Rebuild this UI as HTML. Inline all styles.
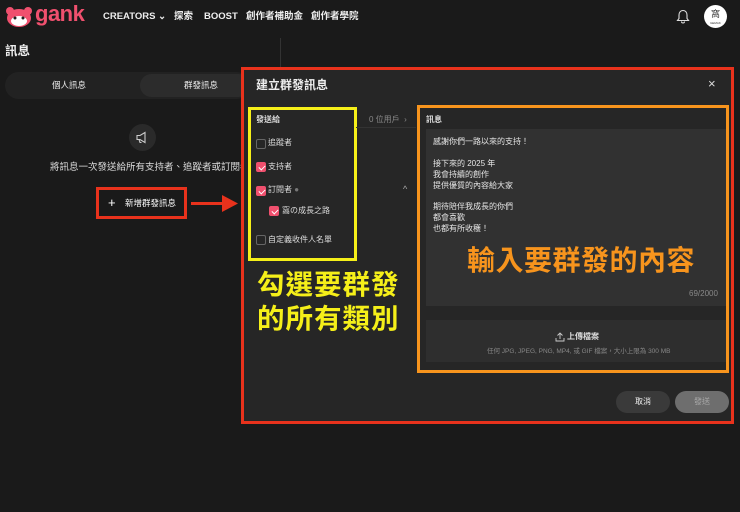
<!DOCTYPE html>
<html><head><meta charset="utf-8"><style>
*{margin:0;padding:0;box-sizing:border-box}
body{width:740px;height:512px;background:#1a1a1a;font-family:"Liberation Sans","Noto Sans CJK TC",sans-serif;color:#eee;position:relative;overflow:hidden}
.a{position:absolute;white-space:nowrap;line-height:1.2}
.cb{position:absolute;width:10px;height:10px;border:1px solid #666;border-radius:2px}
.cb.on{background:#f0506e;border-color:#f0506e}
.cb.on:after{content:"";position:absolute;left:3px;top:1px;width:3px;height:5px;border:solid #fff;border-width:0 1px 1px 0;transform:rotate(45deg)}
.t{font-size:8px;color:#ddd}
.nav{font-size:9.5px;font-weight:bold;line-height:12px;top:11px}
</style></head><body>
<svg class="a" style="left:5px;top:6px" width="28" height="22" viewBox="0 0 28 22"><circle cx="5" cy="5" r="4" fill="#f0506e"/><circle cx="23" cy="5" r="4" fill="#f0506e"/><ellipse cx="14" cy="12" rx="12" ry="9" fill="#f0506e"/><ellipse cx="14" cy="15" rx="8" ry="5" fill="#fff"/><circle cx="10" cy="12" r="1.5" fill="#222"/><circle cx="18" cy="12" r="1.5" fill="#222"/></svg>
<div class="a" style="left:35px;top:1px;font-size:22px;font-weight:bold;color:#f0506e;letter-spacing:-0.5px">gank</div>
<div class="a nav" style="left:103px">CREATORS ⌄</div>
<div class="a nav" style="left:174px">探索</div>
<div class="a nav" style="left:204px">BOOST</div>
<div class="a nav" style="left:246px">創作者補助金</div>
<div class="a nav" style="left:311px">創作者學院</div>
<svg class="a" style="left:676px;top:9px" width="14" height="15" viewBox="0 0 14 15"><path d="M7 1.5C4.5 1.5 3 3.5 3 6v3.5L1.5 11.5h11L11 9.5V6c0-2.5-1.5-4.5-4-4.5zM5.5 12.5a1.5 1.5 0 0 0 3 0" fill="none" stroke="#ddd" stroke-width="1.1"/></svg>
<div class="a" style="left:704px;top:5px;width:23px;height:23px;border-radius:50%;background:#fff;color:#333;font-size:9px;text-align:center;line-height:15px;padding-top:2px">窩<div style="font-size:3px;line-height:3px">GEMAK</div></div>
<div class="a" style="left:5px;top:44px;font-size:12.5px;font-weight:bold">訊息</div>
<div class="a" style="left:280px;top:38px;width:1px;height:40px;background:#333"></div>
<div class="a" style="left:5px;top:72px;width:245px;height:27px;border-radius:14px;background:#222"></div>
<div class="a" style="left:140px;top:74px;width:110px;height:23px;border-radius:12px;background:#2c2c2c"></div>
<div class="a" style="left:52px;top:80px;font-size:8.5px">個人訊息</div>
<div class="a" style="left:184px;top:80px;font-size:8.5px">群發訊息</div>
<div class="a" style="left:129px;top:124px;width:27px;height:27px;border-radius:50%;background:#2a2a2a"></div>
<svg class="a" style="left:135px;top:130px" width="15" height="15" viewBox="0 0 15 15"><path d="M2 5.5h3l5-3v10l-5-3H2zM4 9.5l1 3h1.5" fill="none" stroke="#ccc" stroke-width="1.1"/></svg>
<div class="a" style="left:50px;top:162px;font-size:9.5px;color:#ddd">將訊息一次發送給所有支持者、追蹤者或訂閱者</div>
<div class="a" style="left:96px;top:187px;width:91px;height:32px;border:3px solid #e8321c"></div>
<div class="a" style="left:108px;top:195px;font-size:13px;color:#fff">+</div>
<div class="a" style="left:125px;top:198px;font-size:8.5px;color:#fff">新增群發訊息</div>
<div class="a" style="left:191px;top:202px;width:34px;height:3px;background:#e8321c"></div>
<svg class="a" style="left:222px;top:195px" width="16" height="17"><path d="M0 0L16 8.5L0 17z" fill="#e8321c"/></svg>
<div class="a" style="left:241px;top:67px;width:493px;height:357px;border:3px solid #e8321c;background:#262626"></div>
<div class="a" style="left:256px;top:78px;font-size:12px;font-weight:bold">建立群發訊息</div>
<div class="a" style="left:708px;top:76px;font-size:13px;color:#ddd">×</div>
<div class="a" style="left:248px;top:107px;width:109px;height:154px;border:3px solid #f5ef19"></div>
<div class="a" style="left:256px;top:115px;font-size:8px;font-weight:bold;color:#ddd">發送給</div>
<div class="a" style="left:356px;top:127px;width:60px;height:1px;background:#333"></div>
<div class="a" style="left:369px;top:115px;font-size:8px;color:#888">0 位用戶 &nbsp;›</div>
<div class="cb" style="left:256px;top:139px"></div><div class="a t" style="left:268px;top:138px">追蹤者</div>
<div class="cb on" style="left:256px;top:162px"></div><div class="a t" style="left:268px;top:162px">支持者</div>
<div class="cb on" style="left:256px;top:186px"></div><div class="a t" style="left:268px;top:185px">訂閱者 <span style="color:#777">●</span></div>
<div class="a" style="left:403px;top:184px;font-size:9px;color:#aaa">^</div>
<div class="cb on" style="left:269px;top:206px"></div><div class="a t" style="left:282px;top:206px">窩の成長之路</div>
<div class="cb" style="left:256px;top:235px"></div><div class="a t" style="left:268px;top:235px">自定義收件人名單</div>
<div class="a" style="left:257px;top:268px;font-size:27.5px;font-weight:bold;color:#f5ef19;line-height:34px;letter-spacing:1px">勾選要群發<br>的所有類別</div>
<div class="a" style="left:417px;top:105px;width:312px;height:268px;border:3px solid #f7941d"></div>
<div class="a" style="left:426px;top:115px;font-size:8px;font-weight:bold;color:#ddd">訊息</div>
<div class="a" style="left:426px;top:129px;width:300px;height:177px;background:#313131"></div>
<div class="a" style="left:433px;top:137px;font-size:8px;line-height:10.9px;color:#e6e6e6">感謝你們一路以來的支持！<br><br>接下來的 2025 年<br>我會持續的創作<br>提供優質的內容給大家<br><br>期待陪伴我成長的你們<br>都會喜歡<br>也都有所收穫！</div>
<div class="a" style="left:467px;top:244px;font-size:28px;font-weight:bold;color:#f7941d;letter-spacing:0.5px">輸入要群發的內容</div>
<div class="a" style="left:689px;top:289px;font-size:8px;color:#888">69/2000</div>
<div class="a" style="left:426px;top:320px;width:300px;height:42px;background:#2e2e2e"></div>
<svg class="a" style="left:555px;top:332px" width="10" height="10" viewBox="0 0 10 10"><path d="M5 7V1M2.5 3.5L5 1l2.5 2.5M1 6v3h8V6" fill="none" stroke="#ccc" stroke-width="0.9"/></svg>
<div class="a" style="left:567px;top:332px;font-size:8px;font-weight:bold;color:#ddd">上傳檔案</div>
<div class="a" style="left:487px;top:348px;font-size:6.5px;color:#888">任何 JPG, JPEG, PNG, MP4, 或 GIF 檔案，大小上限為 300 MB</div>
<div class="a" style="left:616px;top:391px;width:54px;height:22px;border-radius:11px;background:#3a3a3a;font-size:8px;text-align:center;line-height:22px;color:#eee">取消</div>
<div class="a" style="left:675px;top:391px;width:54px;height:22px;border-radius:11px;background:#6e6e6e;font-size:8px;text-align:center;line-height:22px;color:#aaa">發送</div>
</body></html>
